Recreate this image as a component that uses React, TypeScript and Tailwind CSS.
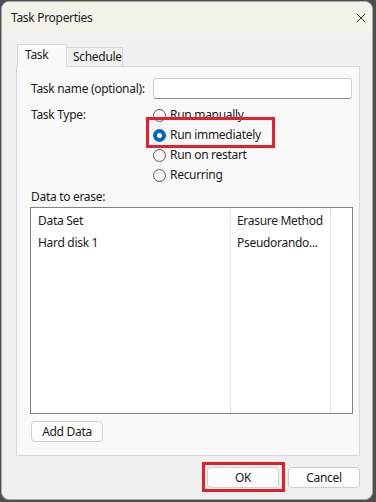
import React from 'react';
import { X } from 'lucide-react';

const font = { fontFamily: '"Noto Sans", "Open Sans", sans-serif' };

const Radio: React.FC<{ label: string; checked?: boolean }> = ({ label, checked }) => (
  <div className="flex h-[20px] items-center gap-[4px]">
    {checked ? (
      <span className="flex h-[13px] w-[13px] items-center justify-center rounded-full bg-[#0067c0]">
        <span className="h-[5px] w-[5px] rounded-full bg-white" />
      </span>
    ) : (
      <span className="h-[13px] w-[13px] rounded-full border border-[#5d5d5d] bg-[#f6f6f6]" />
    )}
    <span>{label}</span>
  </div>
);

const Button: React.FC<{ label: string; className?: string }> = ({ label, className = '' }) => (
  <button className={`flex h-[21px] w-[72px] items-center justify-center rounded-[4px] border border-[#d0d0d0] bg-[#fdfdfd] text-[12px] tracking-[-0.3px] text-[#1b1b1b] ${className}`}>
    {label}
  </button>
);

export default function App() {
  return (
    <div className="h-[502px] w-[376px] bg-[#4f4f4f] pl-px pt-px text-[12px] leading-none tracking-[-0.3px] text-[#1b1b1b]" style={font}>
      <div className="flex h-[499px] w-[372px] flex-col overflow-hidden rounded-[8px] border border-[#a9a9a9] bg-[#f0f0f0]">
        {/* Title bar */}
        <div className="flex h-[31px] shrink-0 items-center justify-between bg-[#f3f3e9] pl-[9px] pr-[3px]">
          <span className="text-[12px]">Task Properties</span>
          <X className="h-[16px] w-[16px] text-[#1b1b1b]" strokeWidth={1.3} />
        </div>

        {/* Tabs */}
        <div className="flex flex-1 flex-col px-[14px] pt-[11px]">
          <div className="flex h-[22px] items-end pl-px">
            <div className="relative z-10 -mb-px flex h-[23px] w-[50px] items-center border border-b-0 border-[#d9d9d9] bg-[#f9f9f9] pl-[7px] pb-[2px]">
              Task
            </div>
            <div className="flex h-[19px] w-[56px] items-center border border-b-0 border-l-0 border-[#d9d9d9] bg-[#f0f0f0] pl-[6px]">
              Schedule
            </div>
          </div>

          {/* Panel */}
          <div className="flex h-[390px] w-[344px] flex-col border border-[#d9d9d9] bg-[#f9f9f9] pl-[13px] pr-[7px] pt-[11px]">
            <div className="flex items-center">
              <span className="w-[123px] pl-px">Task name (optional):</span>
              <div className="h-[21px] w-[199px] rounded-[3px] border border-[#cfcfcf] border-b-[#8a8a8a] bg-white" />
            </div>

            <div className="mt-[6px] flex">
              <span className="w-[123px] pl-px pt-[4px]">Task Type:</span>
              <div className="relative flex flex-col">
                <Radio label="Run manually" />
                <Radio label="Run immediately" checked />
                <Radio label="Run on restart" />
                <Radio label="Recurring" />
                <div className="pointer-events-none absolute left-[-7px] top-[12px] h-[31px] w-[129px] border-[3px] border-[#e3202b]" />
              </div>
            </div>

            <div className="mt-[6px] pl-px">Data to erase:</div>

            <div className="mt-[4px] flex h-[207px] w-[323px] flex-col border border-[#828282] bg-white">
              <div className="flex h-[22px] items-center">
                <span className="h-full w-[200px] border-r border-[#e5e5e5] pl-[7px] pt-[7px]">Data Set</span>
                <span className="h-full w-[100px] whitespace-nowrap border-r border-[#e5e5e5] pl-[6px] pt-[7px]">Erasure Method</span>
              </div>
              <div className="flex flex-1">
                <span className="h-full w-[200px] border-r border-[#e5e5e5] pl-[7px] pt-[7px]">Hard disk 1</span>
                <span className="h-full w-[100px] border-r border-[#e5e5e5] pl-[6px] pt-[7px]">Pseudorando...</span>
              </div>
            </div>

            <Button label="Add Data" className="mt-[7px] ml-px" />
          </div>

          {/* Footer */}
          <div className="-mr-[2px] flex justify-end gap-[9px] pt-[11px]">
            <div className="relative">
              <Button label="OK" className="h-[20px] border-[#1a4e8c]" />
              <div className="pointer-events-none absolute left-[-5px] top-[-5px] h-[30px] w-[83px] border-[3px] border-[#e3202b]" />
            </div>
            <Button label="Cancel" className="h-[20px]" />
          </div>
        </div>
      </div>
    </div>
  );
}
